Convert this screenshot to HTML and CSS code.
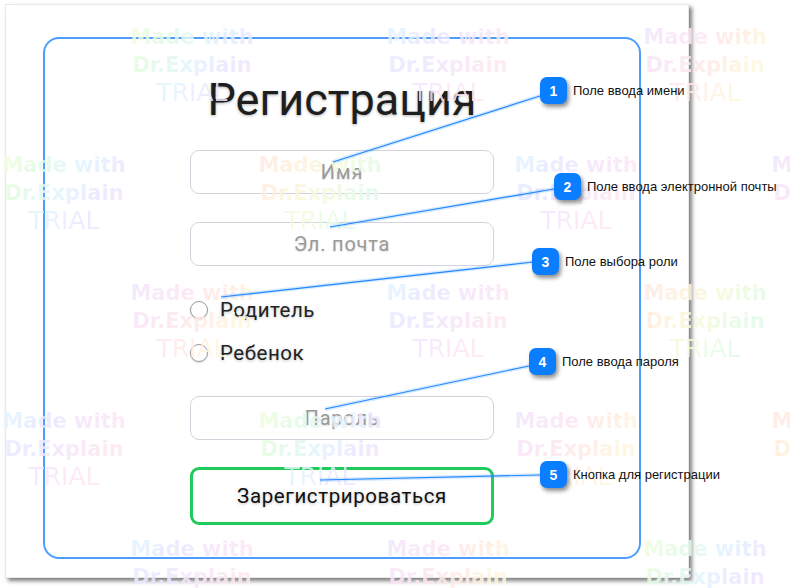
FILE: index.html
```html
<!DOCTYPE html>
<html lang="ru">
<head>
<meta charset="utf-8">
<title>Регистрация</title>
<link rel="stylesheet" href="styles.css">
</head>
<body>
<div class="shot">
  <div class="frame">
    <h1 class="title">Регистрация</h1>
    <div class="field">Имя</div>
    <div class="field gap28">Эл. почта</div>
    <div class="roles">
      <div class="radio"><span class="dot"></span><span>Родитель</span></div>
      <div class="radio"><span class="dot"></span><span>Ребенок</span></div>
    </div>
    <div class="field gap28">Пароль</div>
    <div class="btn">Зарегистрироваться</div>
  </div>
</div>

<div class="marks">
  <div class="wm va" style="left:124px;top:23px">Made with<br>Dr.Explain<br><span class="tr">TRIAL</span></div>
  <div class="wm vb" style="left:380px;top:23px">Made with<br>Dr.Explain<br><span class="tr">TRIAL</span></div>
  <div class="wm vd" style="left:637px;top:23px">Made with<br>Dr.Explain<br><span class="tr">TRIAL</span></div>

  <div class="wm va" style="left:-4px;top:151px">Made with<br>Dr.Explain<br><span class="tr">TRIAL</span></div>
  <div class="wm vc" style="left:252px;top:151px">Made with<br>Dr.Explain<br><span class="tr">TRIAL</span></div>
  <div class="wm vb" style="left:508px;top:151px">Made with<br>Dr.Explain<br><span class="tr">TRIAL</span></div>
  <div class="wm vd" style="left:765px;top:151px">Made with<br>Dr.Explain<br><span class="tr">TRIAL</span></div>

  <div class="wm vd" style="left:124px;top:279px">Made with<br>Dr.Explain<br><span class="tr">TRIAL</span></div>
  <div class="wm vb" style="left:380px;top:279px">Made with<br>Dr.Explain<br><span class="tr">TRIAL</span></div>
  <div class="wm vc" style="left:637px;top:279px">Made with<br>Dr.Explain<br><span class="tr">TRIAL</span></div>

  <div class="wm vb" style="left:-4px;top:407px">Made with<br>Dr.Explain<br><span class="tr">TRIAL</span></div>
  <div class="wm va" style="left:252px;top:407px">Made with<br>Dr.Explain<br><span class="tr">TRIAL</span></div>
  <div class="wm vd" style="left:508px;top:407px">Made with<br>Dr.Explain<br><span class="tr">TRIAL</span></div>
  <div class="wm vc" style="left:765px;top:407px">Made with<br>Dr.Explain<br><span class="tr">TRIAL</span></div>

  <div class="wm vb" style="left:124px;top:535px">Made with<br>Dr.Explain<br><span class="tr">TRIAL</span></div>
  <div class="wm vd" style="left:380px;top:535px">Made with<br>Dr.Explain<br><span class="tr">TRIAL</span></div>
  <div class="wm va" style="left:637px;top:535px">Made with<br>Dr.Explain<br><span class="tr">TRIAL</span></div>
</div>

<svg class="lines" width="790" height="588" viewBox="0 0 790 588">
  <g class="glow">
    <line x1="333" y1="162" x2="540" y2="96"/>
    <line x1="330" y1="227" x2="554" y2="189"/>
    <line x1="221" y1="297" x2="533" y2="262"/>
    <line x1="325" y1="409" x2="529" y2="366"/>
    <line x1="320" y1="480" x2="540" y2="475"/>
  </g>
  <g class="ln">
    <line x1="333" y1="162" x2="540" y2="96"/>
    <line x1="330" y1="227" x2="554" y2="189"/>
    <line x1="221" y1="297" x2="533" y2="262"/>
    <line x1="325" y1="409" x2="529" y2="366"/>
    <line x1="320" y1="480" x2="540" y2="475"/>
  </g>
</svg>

<div class="callout c1"><span class="badge">1</span><span class="lbl">Поле ввода имени</span></div>
<div class="callout c2"><span class="badge">2</span><span class="lbl">Поле ввода электронной почты</span></div>
<div class="callout c3"><span class="badge">3</span><span class="lbl">Поле выбора роли</span></div>
<div class="callout c4"><span class="badge">4</span><span class="lbl">Поле ввода пароля</span></div>
<div class="callout c5"><span class="badge">5</span><span class="lbl">Кнопка для регистрации</span></div>
</body>
</html>
```

FILE: styles.css
```css
* { box-sizing: border-box; }
html, body {
  margin: 0;
  padding: 0;
  background: #ffffff;
}
body {
  width: 790px;
  height: 588px;
  overflow: hidden;
  position: relative;
  font-family: Roboto, "Noto Sans", sans-serif;
}

.shot {
  margin: 4px 0 0 5px;
  width: 684px;
  height: 574px;
  background: #fff;
  border: 1px solid #e9e9e9;
  box-shadow: 3px 3px 4px rgba(0, 0, 0, 0.5);
  padding: 32px 0 0 37px;
}

.frame {
  width: 598px;
  height: 522px;
  border: 2px solid #4d9dff;
  border-radius: 16px;
  display: flex;
  flex-direction: column;
  align-items: center;
  padding-top: 33px;
}

.title {
  margin: 0;
  font-weight: 400;
  font-size: 45px;
  line-height: 56px;
  color: #1e1e1e;
  text-shadow: 0 1px 3px rgba(0, 0, 0, 0.3);
}

.field {
  margin-top: 22px;
  width: 304px;
  height: 44px;
  border: 1px solid #d3d3de;
  border-radius: 9px;
  display: flex;
  align-items: center;
  justify-content: center;
  font-size: 20px;
  letter-spacing: 0.8px;
  color: #9a9a9a;
  text-shadow: 0 1px 2px rgba(0, 0, 0, 0.15);
}
.gap28 { margin-top: 28px; }

.roles {
  margin-top: 29px;
  width: 304px;
  display: flex;
  flex-direction: column;
  gap: 13px;
}
.radio {
  height: 30px;
  display: flex;
  align-items: center;
  gap: 12px;
  font-size: 20.5px;
  letter-spacing: 0.5px;
  color: #222;
  text-shadow: 0 1px 3px rgba(0, 0, 0, 0.25);
}
.dot {
  width: 18px;
  height: 18px;
  border-radius: 50%;
  border: 1px solid #9c9c9c;
  box-shadow: 0 1px 2px rgba(0, 0, 0, 0.15);
  background: #fff;
}

.btn {
  margin-top: 27px;
  width: 304px;
  height: 58px;
  border: 3px solid #1fcb5b;
  border-radius: 9px;
  display: flex;
  align-items: center;
  justify-content: center;
  font-size: 20.5px;
  letter-spacing: 0.6px;
  color: #111;
  text-shadow: 0 1px 3px rgba(0, 0, 0, 0.25);
}

/* watermark overlay */
.marks {
  position: absolute;
  left: 0;
  top: 0;
  width: 790px;
  height: 588px;
  pointer-events: none;
}
.wm {
  position: absolute;
  width: 136px;
  text-align: center;
  font-family: "DejaVu Sans", sans-serif;
  font-weight: 700;
  font-size: 21px;
  line-height: 28px;
  color: transparent;
  -webkit-background-clip: text;
  background-clip: text;
  white-space: nowrap;
  opacity: 0.85;
}
.wm .tr {
  font-weight: 400;
  font-size: 25px;
}
.va { background-image: linear-gradient(125deg, #f6ffd9 0%, #e4fbe4 25%, #e2f3ff 50%, #ece6ff 72%, #fbe6f6 100%); }
.vb { background-image: linear-gradient(125deg, #e2f7ff 0%, #e9e8ff 30%, #f7e6fb 55%, #ffe8ec 78%, #fff3dc 100%); }
.vc { background-image: linear-gradient(125deg, #ffe6ea 0%, #fff1dc 28%, #f4fbdc 50%, #e2fbe8 72%, #e2f2ff 100%); }
.vd { background-image: linear-gradient(125deg, #efe6ff 0%, #fbe6f6 30%, #ffeae6 52%, #fff7dc 75%, #e6fbe3 100%); }

/* callout lines */
.lines {
  position: absolute;
  left: 0;
  top: 0;
}
.lines .glow line {
  stroke: rgba(40, 140, 255, 0.18);
  stroke-width: 4;
}
.lines .ln line {
  stroke: #2188ff;
  stroke-width: 1.2;
}

.callout {
  position: absolute;
  display: flex;
  align-items: center;
  gap: 6px;
}
.c1 { left: 540px; top: 77px; }
.c2 { left: 554px; top: 173px; }
.c3 { left: 532px; top: 248px; }
.c4 { left: 529px; top: 348px; }
.c5 { left: 540px; top: 461px; }

.badge {
  width: 27px;
  height: 27px;
  border-radius: 7px;
  background: #0b7dff;
  box-shadow: 2px 3px 4px rgba(0, 0, 0, 0.45);
  color: #fff;
  font-family: "Liberation Sans", Arial, sans-serif;
  font-weight: 700;
  font-size: 14px;
  display: flex;
  align-items: center;
  justify-content: center;
}
.lbl {
  font-family: "Liberation Sans", Arial, sans-serif;
  font-size: 13px;
  color: #111;
  white-space: nowrap;
}
```
